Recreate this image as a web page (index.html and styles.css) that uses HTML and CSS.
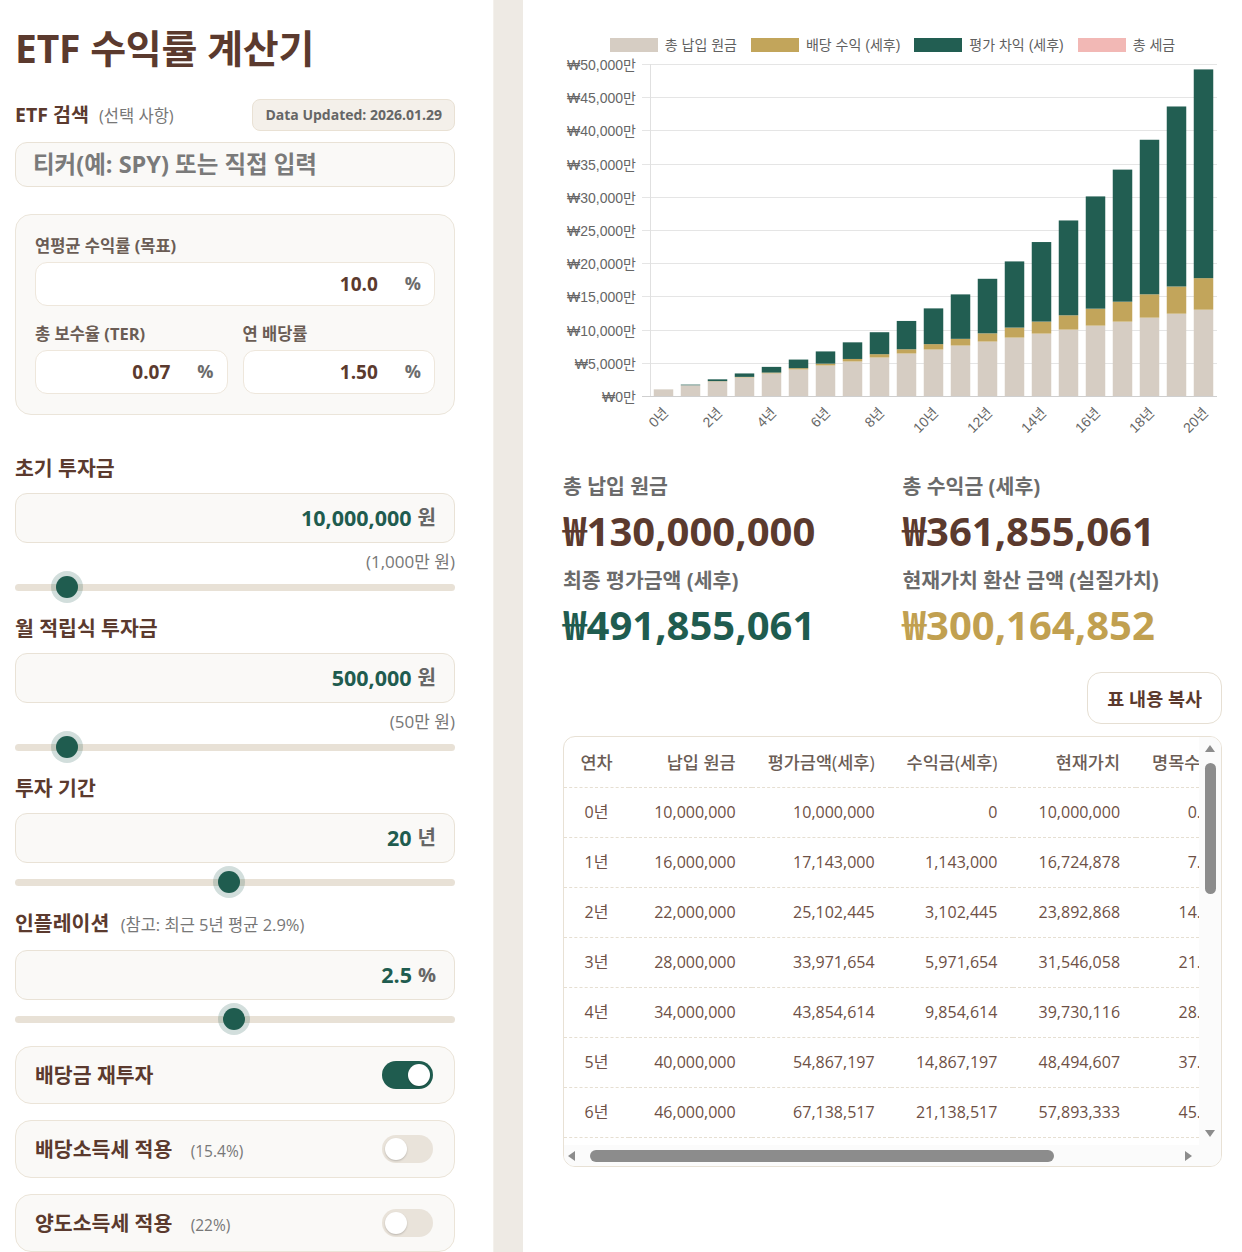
FILE: index.html
```html
<!DOCTYPE html>
<html lang="ko">
<head>
<meta charset="utf-8">
<title>ETF 수익률 계산기</title>
<link rel="stylesheet" href="styles.css">
</head>
<body>
<div class="app">
  <aside class="sidebar">
    <h1 class="title">ETF 수익률 계산기</h1>

    <div class="search-head">
      <div class="search-label">ETF 검색 <span class="sub">(선택 사항)</span></div>
      <div class="badge">Data Updated: 2026.01.29</div>
    </div>
    <div class="search-input">티커(예: SPY) 또는 직접 입력</div>

    <div class="card">
      <div class="card-label">연평균 수익률 (목표)</div>
      <div class="pct-field"><span class="pct-val">10.0</span><span class="pct-unit">%</span></div>
      <div class="card-row">
        <div class="card-col">
          <div class="card-label">총 보수율 (TER)</div>
          <div class="pct-field"><span class="pct-val">0.07</span><span class="pct-unit">%</span></div>
        </div>
        <div class="card-col">
          <div class="card-label">연 배당률</div>
          <div class="pct-field"><span class="pct-val">1.50</span><span class="pct-unit">%</span></div>
        </div>
      </div>
    </div>

    <section class="group first">
      <div class="group-label">초기 투자금</div>
      <div class="big-field"><span class="big-val">10,000,000</span><span class="big-unit">원</span></div>
      <div class="hint">(1,000만 원)</div>
      <div class="slider after-hint"><div class="track"></div><div class="thumb" style="left:41px"></div></div>
    </section>

    <section class="group">
      <div class="group-label">월 적립식 투자금</div>
      <div class="big-field"><span class="big-val">500,000</span><span class="big-unit">원</span></div>
      <div class="hint">(50만 원)</div>
      <div class="slider after-hint"><div class="track"></div><div class="thumb" style="left:41px"></div></div>
    </section>

    <section class="group">
      <div class="group-label">투자 기간</div>
      <div class="big-field"><span class="big-val">20</span><span class="big-unit">년</span></div>
      <div class="slider"><div class="track"></div><div class="thumb" style="left:203px"></div></div>
    </section>

    <section class="group">
      <div class="group-label">인플레이션 <span class="sub">(참고: 최근 5년 평균 2.9%)</span></div>
      <div class="big-field"><span class="big-val">2.5</span><span class="big-unit">%</span></div>
      <div class="slider"><div class="track"></div><div class="thumb" style="left:208px"></div></div>
    </section>

    <div class="toggles">
      <div class="toggle-card">
        <span class="toggle-label">배당금 재투자</span>
        <span class="switch on"><span class="knob"></span></span>
      </div>
      <div class="toggle-card">
        <span class="toggle-label">배당소득세 적용 <span class="toggle-sub">(15.4%)</span></span>
        <span class="switch"><span class="knob"></span></span>
      </div>
      <div class="toggle-card">
        <span class="toggle-label">양도소득세 적용 <span class="toggle-sub">(22%)</span></span>
        <span class="switch"><span class="knob"></span></span>
      </div>
    </div>
  </aside>

  <div class="gutter"></div>

  <main class="main">
    <div class="legend">
      <div class="legend-item"><span class="swatch sw-principal"></span>총 납입 원금</div>
      <div class="legend-item"><span class="swatch sw-div"></span>배당 수익 (세후)</div>
      <div class="legend-item"><span class="swatch sw-gain"></span>평가 차익 (세후)</div>
      <div class="legend-item"><span class="swatch sw-tax"></span>총 세금</div>
    </div>
    <svg id="chart" class="chart" width="659" height="393" viewBox="0 0 659 393" xmlns="http://www.w3.org/2000/svg"></svg>

    <div class="summary">
      <div class="sum-item">
        <div class="sum-label">총 납입 원금</div>
        <div class="sum-val brown">₩130,000,000</div>
      </div>
      <div class="sum-item">
        <div class="sum-label">총 수익금 (세후)</div>
        <div class="sum-val brown">₩361,855,061</div>
      </div>
      <div class="sum-item">
        <div class="sum-label">최종 평가금액 (세후)</div>
        <div class="sum-val green">₩491,855,061</div>
      </div>
      <div class="sum-item">
        <div class="sum-label">현재가치 환산 금액 (실질가치)</div>
        <div class="sum-val gold">₩300,164,852</div>
      </div>
    </div>

    <div class="actions"><button class="copy-btn" type="button">표 내용 복사</button></div>

    <div class="table-box">
      <div class="table-viewport">
        <table class="data-table">
          <thead>
            <tr><th>연차</th><th>납입 원금</th><th>평가금액(세후)</th><th>수익금(세후)</th><th>현재가치</th><th>명목수익률</th><th>실질수익률</th></tr>
          </thead>
          <tbody id="tbody"></tbody>
        </table>
      </div>
      <div class="vscroll">
        <span class="arrow-up"></span>
        <span class="vthumb"></span>
        <span class="arrow-down"></span>
      </div>
      <div class="hscroll">
        <span class="arrow-left"></span>
        <span class="hthumb"></span>
        <span class="arrow-right"></span>
      </div>
      <div class="corner"></div>
    </div>
  </main>
</div>
<script src="script.js"></script>
</body>
</html>
```

FILE: styles.css
```css
* { box-sizing: border-box; }

body {
  margin: 0;
  background: #ffffff;
  color: #5b3a2e;
  font-family: "Open Sans", "Noto Sans CJK KR", sans-serif;
  line-height: 1.3;
}

.app {
  display: flex;
  height: 1252px;
  overflow: hidden;
}

/* ---------- sidebar ---------- */
.sidebar {
  flex: none;
  width: 493px;
  padding: 24px 38px 0 15px;
  overflow: hidden;
  display: flex;
  flex-direction: column;
}

.gutter {
  flex: none;
  width: 30px;
  background: #eeeae4;
  border-left: 1px solid #f4f1ec;
}

.title {
  margin: 0;
  font-size: 39px;
  line-height: 48px;
  font-weight: 700;
  letter-spacing: -0.2px;
  color: #5b3a2e;
}

.search-head {
  margin-top: 27px;
  height: 32px;
  display: flex;
  align-items: center;
  justify-content: space-between;
}

.search-label {
  font-size: 19.5px;
  font-weight: 700;
  line-height: 24px;
  color: #5b3a2e;
}

.sub {
  font-size: 16.5px;
  font-weight: 400;
  color: #777777;
  margin-left: 5px;
}

.badge {
  height: 32px;
  line-height: 30px;
  padding: 0 12px;
  border: 1px solid #e9e1d4;
  border-radius: 8px;
  background: #f4f0ea;
  font-size: 14px;
  font-weight: 700;
  color: #666666;
}

.search-input {
  margin-top: 11px;
  height: 48px;
  padding: 0 17px;
  border: 1px solid #e9e2d6;
  border-radius: 12px;
  background: #faf9f7;
  display: flex;
  align-items: center;
  font-size: 23.5px;
  font-weight: 700;
  color: #7a7a7a;
}

.card {
  margin-top: 27px;
  padding: 21px 19px 20px;
  border: 1px solid #ebe5da;
  border-radius: 16px;
  background: #faf9f7;
}

.card-label {
  font-size: 16.5px;
  font-weight: 700;
  line-height: 20px;
  color: #6b5d55;
}

.pct-field {
  margin-top: 6px;
  height: 44px;
  padding: 0 13px;
  border: 1px solid #eee7dc;
  border-radius: 12px;
  background: #ffffff;
  display: flex;
  align-items: center;
  justify-content: flex-end;
}

.pct-val {
  font-size: 19px;
  font-weight: 700;
  color: #5b3a2e;
}

.pct-unit {
  margin-left: 27px;
  font-size: 18px;
  font-weight: 700;
  color: #6b6b6b;
}

.card-row {
  margin-top: 18px;
  display: grid;
  grid-template-columns: 1fr 1fr;
  column-gap: 15px;
}

.group { margin-top: 17px; }
.group.first { margin-top: 41px; }

.group-label {
  font-size: 20.5px;
  font-weight: 700;
  line-height: 24px;
  color: #5b3a2e;
}

.group-label .sub { margin-left: 6px; }

.big-field {
  margin-top: 13px;
  height: 50px;
  padding: 0 18px;
  border: 1px solid #e9e2d6;
  border-radius: 12px;
  background: #faf9f7;
  display: flex;
  align-items: center;
  justify-content: flex-end;
}

.big-val {
  font-size: 21.5px;
  font-weight: 700;
  color: #1f5c4f;
}

.big-unit {
  margin-left: 6px;
  font-size: 20px;
  font-weight: 700;
  color: #666666;
}

.hint {
  margin-top: 9px;
  line-height: 20px;
  text-align: right;
  font-size: 17px;
  color: #777777;
}

.slider {
  position: relative;
  margin-top: 7px;
  height: 24px;
  display: flex;
  align-items: center;
}

.slider.after-hint { margin-top: 3px; }

.track {
  flex: 1;
  height: 7px;
  border-radius: 4px;
  background: #e8e1d6;
}

.thumb {
  position: absolute;
  top: 1px;
  width: 22px;
  height: 22px;
  border-radius: 50%;
  background: #1f5c4f;
  box-shadow: 0 0 0 5px rgba(31, 92, 79, 0.2);
}

.toggles {
  margin-top: 15px;
  display: flex;
  flex-direction: column;
  gap: 16px;
}

.toggle-card {
  flex: none;
  height: 58px;
  padding: 0 21px 0 19px;
  border: 1px solid #ebe4d8;
  border-radius: 16px;
  background: #faf9f7;
  display: flex;
  align-items: center;
  justify-content: space-between;
}

.toggle-label {
  font-size: 20.5px;
  font-weight: 700;
  color: #5b3a2e;
}

.toggle-sub {
  margin-left: 13px;
  font-size: 15.5px;
  font-weight: 400;
  color: #777777;
}

.switch {
  width: 51px;
  height: 28px;
  padding: 3px;
  border-radius: 14px;
  background: #e9e3da;
  display: flex;
  justify-content: flex-start;
}

.switch.on {
  background: #1f5c4f;
  justify-content: flex-end;
}

.knob {
  width: 22px;
  height: 22px;
  border-radius: 50%;
  background: #ffffff;
  box-shadow: 0 1px 2px rgba(0, 0, 0, 0.2);
}

/* ---------- main ---------- */
.main {
  flex: 1;
  min-width: 0;
  padding: 33px 20px 0 40px;
}

.legend {
  height: 24px;
  display: flex;
  align-items: center;
  justify-content: center;
  gap: 14px;
  font-family: "Liberation Sans", "Noto Sans CJK KR", sans-serif;
  font-size: 14px;
  color: #5f5f5f;
}

.legend-item {
  display: flex;
  align-items: center;
  gap: 7px;
}

.swatch {
  width: 48px;
  height: 14px;
}

.sw-principal { background: #d6cdc3; }
.sw-div { background: #c2a55b; }
.sw-gain { background: #225e52; }
.sw-tax { background: #f2b8b5; }

.chart { display: block; overflow: visible; }

.ytick, .xtick {
  font-family: "Liberation Sans", "Noto Sans CJK KR", sans-serif;
  font-size: 14px;
  fill: #666666;
}

.summary {
  margin-top: 24px;
  display: grid;
  grid-template-columns: 1fr 1fr;
  column-gap: 20px;
  row-gap: 13px;
}

.sum-label {
  font-size: 20.5px;
  font-weight: 700;
  line-height: 24px;
  color: #6b6b6b;
}

.sum-val {
  margin-top: 9px;
  font-size: 40px;
  font-weight: 700;
  line-height: 48px;
}

.brown { color: #5b3a2e; }
.green { color: #1f5c4f; }
.gold { color: #c1a050; }

.actions {
  margin-top: 23px;
  display: flex;
  justify-content: flex-end;
}

.copy-btn {
  height: 52px;
  padding: 0 19px;
  border: 1px solid #e6dfd3;
  border-radius: 14px;
  background: #ffffff;
  font-family: inherit;
  font-size: 18.5px;
  font-weight: 700;
  color: #5b3a2e;
}

.table-box {
  margin-top: 12px;
  border: 1px solid #e8e1d5;
  border-radius: 12px;
  overflow: hidden;
  display: grid;
  grid-template-columns: 1fr 22px;
  grid-template-rows: 408px 21px;
}

.table-viewport {
  overflow: hidden;
  min-width: 0;
}

.data-table {
  border-collapse: collapse;
  white-space: nowrap;
}

.data-table th,
.data-table td {
  height: 50px;
  padding: 0 16px;
  font-size: 16px;
  line-height: 20px;
  text-align: right;
  border-bottom: 1px dashed #e6dfd2;
}

.data-table th {
  font-size: 17.5px;
  font-weight: 500;
  color: #6b5d55;
}

.data-table td {
  font-weight: 400;
  color: #6e5045;
}

.data-table th:first-child,
.data-table td:first-child {
  text-align: center;
}

.vscroll {
  background: #fbfbfb;
  display: flex;
  flex-direction: column;
  align-items: center;
  padding: 8px 0 8px;
}

.arrow-up {
  width: 0;
  height: 0;
  border-left: 5px solid transparent;
  border-right: 5px solid transparent;
  border-bottom: 7px solid #8c8c8c;
}

.vthumb {
  margin-top: 11px;
  width: 11px;
  height: 131px;
  border-radius: 6px;
  background: #8c8c8c;
}

.arrow-down {
  margin-top: auto;
  width: 0;
  height: 0;
  border-left: 5px solid transparent;
  border-right: 5px solid transparent;
  border-top: 7px solid #8c8c8c;
}

.hscroll {
  background: #fbfbfb;
  display: flex;
  align-items: center;
  padding: 0 7px 0 4px;
}

.arrow-left {
  width: 0;
  height: 0;
  border-top: 5px solid transparent;
  border-bottom: 5px solid transparent;
  border-right: 7px solid #8c8c8c;
}

.hthumb {
  margin-left: 15px;
  width: 464px;
  height: 12px;
  border-radius: 6px;
  background: #8c8c8c;
}

.arrow-right {
  margin-left: auto;
  width: 0;
  height: 0;
  border-top: 5px solid transparent;
  border-bottom: 5px solid transparent;
  border-left: 7px solid #8c8c8c;
}

.corner { background: #fbfbfb; }
```

FILE: script.js
```js
(function () {
  function fmt(n) {
    var s = String(Math.round(n));
    return s.replace(/\B(?=(\d{3})+(?!\d))/g, ",");
  }

  var rows = [];
  var v = 10000000, contrib = 10000000, div = 0, gain = 0;
  rows.push({ n: 0, contrib: contrib, value: v, div: div, gain: gain });
  for (var n = 1; n <= 20; n++) {
    var d = v * 0.015, g = v * 0.0993;
    v = v + d + g + 6000000;
    div += d;
    gain += g;
    contrib += 6000000;
    rows.push({ n: n, contrib: contrib, value: v, div: div, gain: gain });
  }

  /* table */
  var tbody = document.getElementById("tbody");
  rows.forEach(function (r) {
    var value = Math.round(r.value);
    var pv = r.value / Math.pow(1.025, r.n);
    var profit = value - r.contrib;
    var nominal = profit / r.contrib * 100;
    var real = (pv - r.contrib) / r.contrib * 100;
    var tr = document.createElement("tr");
    [r.n + "년", fmt(r.contrib), fmt(value), fmt(profit), fmt(pv),
     nominal.toFixed(2) + "%", real.toFixed(2) + "%"].forEach(function (c) {
      var td = document.createElement("td");
      td.textContent = c;
      tr.appendChild(td);
    });
    tbody.appendChild(tr);
  });

  /* chart */
  var NS = "http://www.w3.org/2000/svg";
  var svg = document.getElementById("chart");
  function el(tag, attrs, text) {
    var e = document.createElementNS(NS, tag);
    for (var k in attrs) e.setAttribute(k, attrs[k]);
    if (text != null) e.textContent = text;
    svg.appendChild(e);
    return e;
  }
  var L = 87, R = 654, T = 7, B = 339, MAX = 500000000;
  function y(val) { return B - val / MAX * (B - T); }

  for (var i = 0; i <= 10; i++) {
    var val = i * 50000000;
    var yy = Math.round(y(val)) + 0.5;
    el("line", { x1: L - 8, x2: R, y1: yy, y2: yy,
      stroke: i === 0 ? "#cfcfcf" : "#e5e5e5", "stroke-width": 1 });
    el("text", { x: L - 14, y: yy, "text-anchor": "end",
      "dominant-baseline": "central", "class": "ytick" }, "₩" + fmt(val / 10000) + "만");
  }
  el("line", { x1: L + 0.5, x2: L + 0.5, y1: T, y2: B, stroke: "#e0e0e0", "stroke-width": 1 });

  var slot = (R - L) / 21, bw = 19.5;
  rows.forEach(function (r, idx) {
    var x = L + idx * slot + (slot - bw) / 2;
    var segs = [[r.contrib, "#d6cdc3"], [r.div, "#c2a55b"], [r.gain, "#225e52"]];
    var base = 0;
    segs.forEach(function (s) {
      var y0 = y(base), y1 = y(base + s[0]);
      if (y0 - y1 > 0.1) {
        el("rect", { x: x, y: y1, width: bw, height: y0 - y1, fill: s[1] });
      }
      base += s[0];
    });
    if (idx % 2 === 0) {
      var cx = x + bw / 2 + 2;
      el("text", { transform: "translate(" + cx + "," + (B + 14) + ") rotate(-45)",
        "text-anchor": "end", "dominant-baseline": "central", "class": "xtick" }, r.n + "년");
    }
  });
})();
```
